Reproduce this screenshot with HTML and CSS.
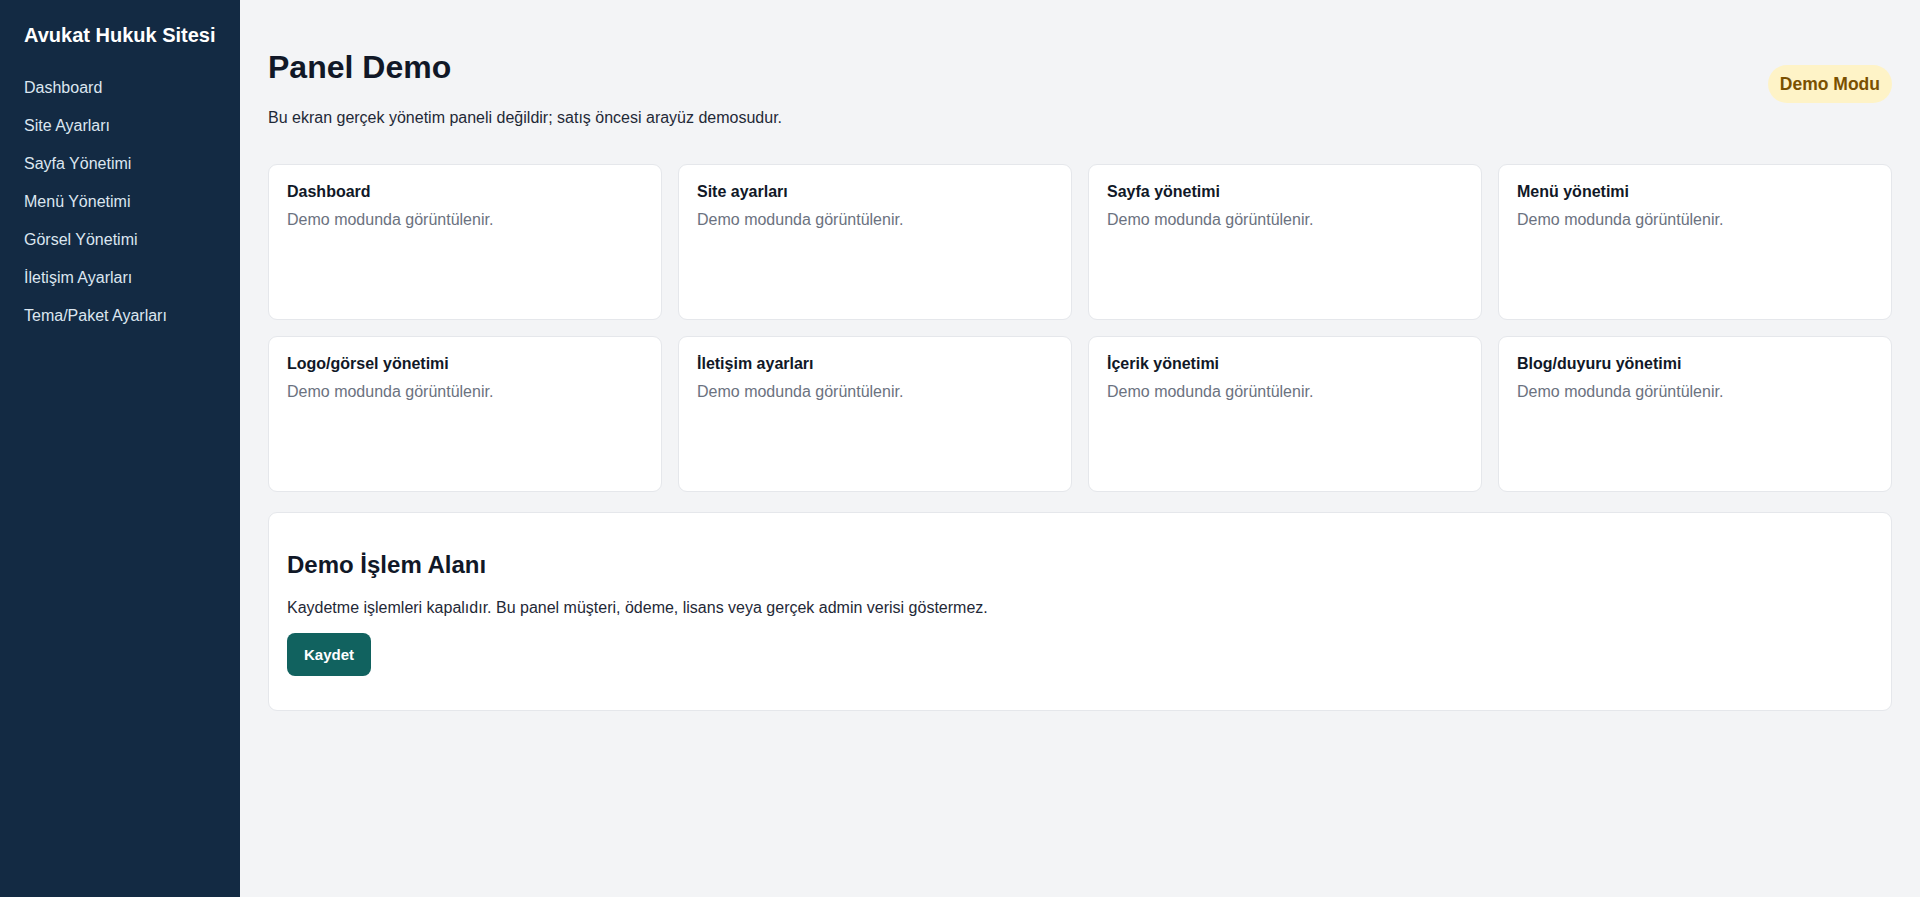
FILE: index.html
```html
<!DOCTYPE html>
<html lang="tr">
<head>
    <meta charset="UTF-8">
    <meta name="viewport" content="width=device-width, initial-scale=1.0">
    <title>Panel Demo</title>
    <link rel="stylesheet" href="styles.css">
</head>
<body>
    <div class="layout">
        <aside class="sidebar">
            <h2 class="brand">Avukat Hukuk Sitesi</h2>
            <nav class="nav">
                <a href="#">Dashboard</a>
                <a href="#">Site Ayarları</a>
                <a href="#">Sayfa Yönetimi</a>
                <a href="#">Menü Yönetimi</a>
                <a href="#">Görsel Yönetimi</a>
                <a href="#">İletişim Ayarları</a>
                <a href="#">Tema/Paket Ayarları</a>
            </nav>
        </aside>

        <main class="main">
            <header class="page-head">
                <div>
                    <h1>Panel Demo</h1>
                    <p>Bu ekran gerçek yönetim paneli değildir; satış öncesi arayüz demosudur.</p>
                </div>
                <span class="badge">Demo Modu</span>
            </header>

            <section class="cards">
                <div class="card">
                    <h3>Dashboard</h3>
                    <p>Demo modunda görüntülenir.</p>
                </div>
                <div class="card">
                    <h3>Site ayarları</h3>
                    <p>Demo modunda görüntülenir.</p>
                </div>
                <div class="card">
                    <h3>Sayfa yönetimi</h3>
                    <p>Demo modunda görüntülenir.</p>
                </div>
                <div class="card">
                    <h3>Menü yönetimi</h3>
                    <p>Demo modunda görüntülenir.</p>
                </div>
                <div class="card">
                    <h3>Logo/görsel yönetimi</h3>
                    <p>Demo modunda görüntülenir.</p>
                </div>
                <div class="card">
                    <h3>İletişim ayarları</h3>
                    <p>Demo modunda görüntülenir.</p>
                </div>
                <div class="card">
                    <h3>İçerik yönetimi</h3>
                    <p>Demo modunda görüntülenir.</p>
                </div>
                <div class="card">
                    <h3>Blog/duyuru yönetimi</h3>
                    <p>Demo modunda görüntülenir.</p>
                </div>
            </section>

            <section class="panel">
                <h2>Demo İşlem Alanı</h2>
                <p>Kaydetme işlemleri kapalıdır. Bu panel müşteri, ödeme, lisans veya gerçek admin verisi göstermez.</p>
                <form class="panel-form" onsubmit="return false;">
                    <button type="submit" class="btn">Kaydet</button>
                </form>
            </section>
        </main>
    </div>
</body>
</html>
```

FILE: styles.css
```css
* {
    box-sizing: border-box;
}

body {
    margin: 0;
    font-family: "Liberation Sans", Arial, sans-serif;
    font-size: 16px;
    color: #1f2937;
    background-color: #f3f4f6;
}

.layout {
    display: flex;
    min-height: 100vh;
}

.sidebar {
    width: 240px;
    flex-shrink: 0;
    background-color: #132a43;
    padding: 24px;
}

.brand {
    margin: 0 0 22px;
    font-size: 20px;
    line-height: 23px;
    color: #fff;
}

.nav {
    display: flex;
    flex-direction: column;
}

.nav a {
    display: block;
    padding: 10px 0;
    line-height: 18px;
    color: #dce6f0;
    text-decoration: none;
}

.main {
    flex: 1;
    padding: 28px;
}

.page-head {
    display: flex;
    justify-content: space-between;
    align-items: center;
    margin-bottom: 18px;
}

.page-head h1 {
    margin: 21px 0;
    font-size: 32px;
    line-height: 36px;
    color: #111827;
}

.page-head p {
    margin: 0 0 16px;
    line-height: 24px;
    color: #1f2937;
}

.badge {
    margin-bottom: 6px;
    padding: 9px 12px;
    border-radius: 999px;
    background-color: #fef3c7;
    color: #7a5000;
    font-weight: bold;
    font-size: 17.5px;
    line-height: 20px;
}

.cards {
    display: grid;
    grid-template-columns: repeat(4, 1fr);
    gap: 16px;
    margin-bottom: 20px;
}

.card {
    min-height: 156px;
    padding: 18px 18px 16px;
    background-color: #fff;
    border: 1px solid #e5e7eb;
    border-radius: 9px;
}

.card h3 {
    margin: 0 0 7px;
    font-size: 16px;
    color: #111827;
}

.card p {
    margin: 0;
    line-height: 24px;
    color: #6b7280;
}

.panel {
    padding: 18px;
    background-color: #fff;
    border: 1px solid #e5e7eb;
    border-radius: 9px;
}

.panel h2 {
    margin: 20px 0;
    font-size: 24px;
    color: #111827;
}

.panel p {
    margin: 0 0 16px;
    color: #1f2937;
}

.panel-form {
    margin-bottom: 16px;
}

.btn {
    padding: 13px 17px;
    border: none;
    border-radius: 8px;
    background-color: #11625f;
    color: #fff;
    font-family: "Liberation Sans", Arial, sans-serif;
    font-weight: bold;
    font-size: 15px;
    cursor: pointer;
}
```
